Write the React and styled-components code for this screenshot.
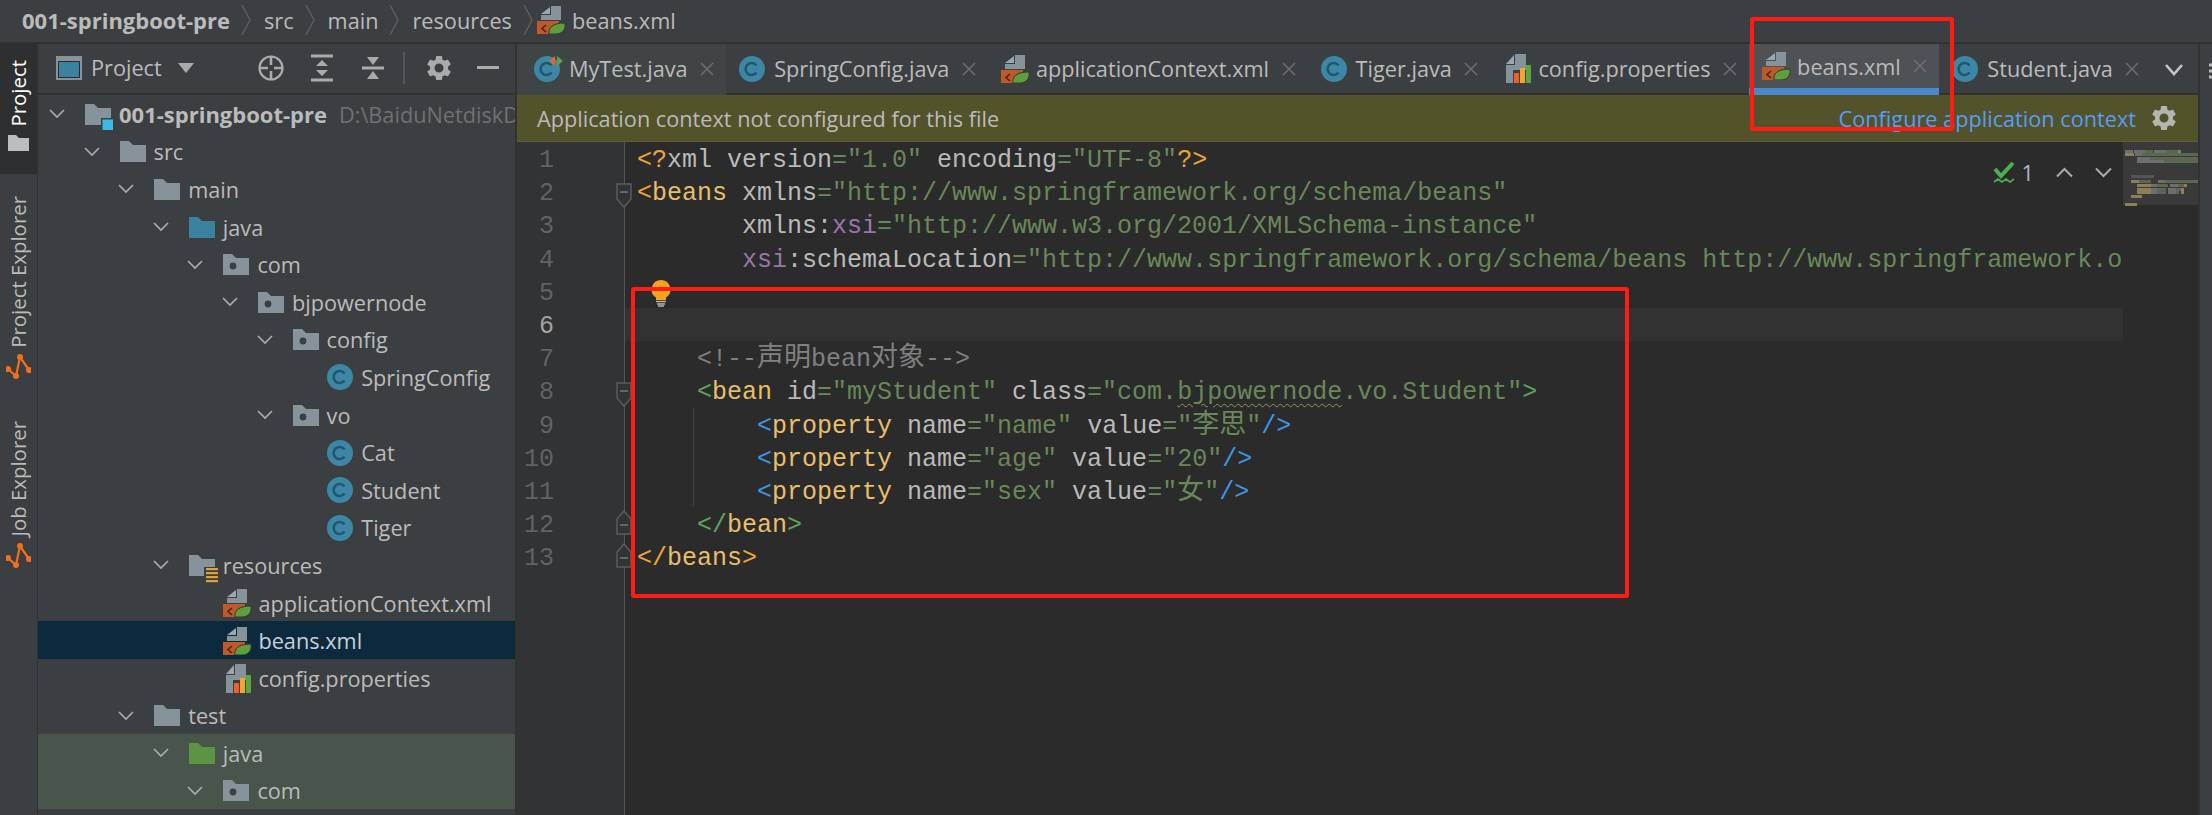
import React from 'react';
import styled, { createGlobalStyle } from 'styled-components';
import { MdSettings } from 'react-icons/md';

const GlobalStyle = createGlobalStyle`
  html, body { margin: 0; padding: 0; background: #3c3f41; }
  * { box-sizing: border-box; }
`;

const UI_FONT = `"Open Sans", "Noto Sans", "Noto Sans CJK SC", sans-serif`;
const CODE_FONT = `"Liberation Mono", "Noto Sans CJK SC", monospace`;

const Page = styled.div`
  position: relative;
  width: 2212px;
  height: 815px;
  overflow: hidden;
  display: flex;
  flex-direction: column;
  background: #3c3f41;
  font-family: ${UI_FONT};
  font-size: 21.7px;
  color: #bbbbbb;
`;

const Breadcrumbs = styled.div`
  flex: none;
  height: 44px;
  display: flex;
  align-items: center;
  padding: 0 0 2px 22px;
  border-bottom: 2px solid #323232;
`;
const Crumb = styled.span`
  font-weight: ${(p) => (p.$bold ? 700 : 400)};
  font-size: ${(p) => (p.$bold ? '22px' : 'inherit')};
  margin-left: ${(p) => p.$ml || 0}px;
  white-space: nowrap;
`;
const CrumbSep = styled.svg`
  width: 10px;
  height: 30px;
  margin: 0 ${(p) => p.$mr || 13}px 0 11px;
  flex: none;
`;

const Body = styled.div`
  flex: 1;
  display: flex;
  min-height: 0;
`;

const Strip = styled.div`
  flex: none;
  width: 38px;
  display: flex;
  flex-direction: column;
  border-right: 1px solid #323232;
`;
const StripTab = styled.div`
  display: flex;
  flex-direction: column;
  align-items: center;
  gap: ${(p) => p.$gap || 8}px;
  height: ${(p) => p.$h}px;
  padding-top: ${(p) => p.$top || 0}px;
  background: ${(p) => (p.$active ? '#2d2f30' : 'transparent')};
`;
const StripLabel = styled.span`
  writing-mode: vertical-rl;
  transform: rotate(180deg);
  font-size: 20.4px;
  line-height: 37px;
  white-space: nowrap;
  color: ${(p) => (p.$active ? '#ffffff' : '#bbbbbb')};
`;

const Panel = styled.div`
  flex: none;
  width: 477px;
  display: flex;
  flex-direction: column;
  overflow: hidden;
`;
const PanelHeader = styled.div`
  flex: none;
  height: 51px;
  display: flex;
  align-items: center;
  padding: 0 0 2px 18px;
  border-bottom: 2px solid #323232;
`;
const PanelTitle = styled.span`
  margin-left: 9px;
  width: 87px;
`;
const HeaderIcon = styled.svg`
  flex: none;
  margin-left: ${(p) => p.$ml || 0}px;
`;
const Tree = styled.div`
  flex: 1;
  overflow: hidden;
`;
const Row = styled.div`
  height: 37.6px;
  display: flex;
  align-items: center;
  white-space: nowrap;
  padding-top: 1px;
  padding-left: ${(p) => 11 + p.$depth * 34.6}px;
  background: ${(p) => (p.$selected ? '#0d293e' : p.$test ? '#49544a' : 'transparent')};
`;
const Chevron = styled.svg`
  flex: none;
  width: 16px;
  height: 10px;
  margin-right: 20px;
  visibility: ${(p) => (p.$hidden ? 'hidden' : 'visible')};
`;
const RowLabel = styled.span`
  margin-left: ${(p) => p.$ml || 8}px;
  font-weight: ${(p) => (p.$bold ? 700 : 400)};
  font-size: ${(p) => (p.$bold ? '22px' : 'inherit')};
  color: ${(p) => (p.$selected ? '#c8d0d8' : '#bbbbbb')};
`;
const Hint = styled.span`
  margin-left: 12px;
  color: #6f7173;
`;

const Divider = styled.div`
  flex: none;
  width: 2px;
  background: #323232;
`;

const EditorColumn = styled.div`
  flex: none;
  width: 1681px;
  display: flex;
  flex-direction: column;
  min-width: 0;
`;
const TabBar = styled.div`
  flex: none;
  height: 51px;
  display: flex;
  align-items: stretch;
  position: relative;
  box-shadow: inset 0 -2px 0 #323232;
`;
const Tab = styled.div`
  display: flex;
  align-items: center;
  white-space: nowrap;
  padding: ${(p) => (p.$active ? '0 12px 7px 13px' : '0 12px 2px 13px')};
  padding-left: ${(p) => (p.$first ? 17 : 13)}px;
  background: ${(p) => (p.$active ? '#4e5254' : p.$test ? '#3f4544' : 'transparent')};
  box-shadow: ${(p) => (p.$active ? 'inset 0 -7px 0 #4a88c7' : 'none')};
  color: #bbbbbb;
`;
const TabLabel = styled.span`
  margin-left: ${(p) => p.$ml}px;
`;
const CloseX = styled.svg`
  width: 14px;
  height: 14px;
  margin-left: 12.5px;
  flex: none;
`;
const TabsMore = styled.svg`
  position: absolute;
  right: 14px;
  top: 19px;
`;

const Banner = styled.div`
  flex: none;
  height: 47px;
  display: flex;
  align-items: center;
  justify-content: space-between;
  padding: 0 19px 0 20px;
  background: #52522b;
  border-bottom: 1px solid #5f5f3f;
`;
const BannerActions = styled.div`
  display: flex;
  align-items: center;
  gap: 13px;
`;
const BannerLink = styled.a`
  color: #589df6;
`;

const EditorBody = styled.div`
  flex: 1;
  position: relative;
  display: flex;
  min-height: 0;
  background: #2b2b2b;
`;
const Gutter = styled.div`
  flex: none;
  width: 108px;
  background: #313335;
  border-right: 1px solid #555555;
`;
const GutterRow = styled.div`
  position: relative;
  height: 33.2px;
  line-height: 37px;
  padding-right: 70px;
  text-align: right;
  font-family: ${CODE_FONT};
  font-size: 25px;
  color: ${(p) => (p.$current ? '#a4a3a3' : '#606366')};
`;
const FoldMark = styled.svg`
  position: absolute;
  right: -8px;
  top: ${(p) => (p.$up ? 3 : 8)}px;
`;
const CodeArea = styled.div`
  flex: 1;
  min-width: 0;
  overflow: hidden;
  font-family: ${CODE_FONT};
  font-size: 25px;
  color: #bababa;
`;
const Line = styled.div`
  height: 33.2px;
  line-height: 37px;
  padding-left: 12px;
  white-space: pre;
  background: ${(p) => (p.$current ? '#323232' : 'transparent')};
`;
const IndentGroup = styled.div`
  position: relative;
  &::before {
    content: '';
    position: absolute;
    left: 68px;
    top: 0;
    bottom: 0;
    width: 1px;
    background: #3b4a3a;
  }
`;
const T = styled.span`
  color: ${(p) => p.$c};
`;
const Squiggle = styled.span`
  text-decoration: underline wavy #8a9a62 1px;
  text-underline-offset: 4px;
`;
const Cjk = styled.span`
  font-size: 27px;
`;
const Bulb = styled.svg`
  position: absolute;
  left: 134px;
  top: 138px;
`;
const Status = styled.div`
  position: absolute;
  right: 86px;
  top: 16px;
  display: flex;
  align-items: center;
  color: #a9b7c6;
`;
const StatusCount = styled.span`
  margin: 0 22px 0 7px;
`;
const StatusArrow = styled.svg`
  margin-right: 22px;
`;
const Minimap = styled.div`
  flex: none;
  width: 75px;
`;
const RightStrip = styled.div`
  flex: none;
  width: 14px;
  border-left: 2px solid #323232;
  padding: 18px 0 0 9px;
  overflow: hidden;
`;
const Callout = styled.div`
  position: absolute;
  left: ${(p) => p.$x}px;
  top: ${(p) => p.$y}px;
  width: ${(p) => p.$w}px;
  height: ${(p) => p.$h}px;
  border: 4px solid #fe1d14;
  border-radius: 3px;
  pointer-events: none;
`;

const KW = '#e8bf6a';
const ORANGE = '#f0a732';
const GREEN = '#5aa75a';
const BLUE = '#3b97e3';
const STR = '#6a8759';
const ATTR = '#bababa';

const FolderIcon = ({ color = '#87939a', dot, children }) => (
  <svg width="26" height="21" viewBox="0 0 26 21" style={{ flex: 'none', overflow: 'visible' }}>
    <path d="M0 0h9l4 4h13v17H0z" fill={color} />
    {dot && <circle cx="10" cy="12" r="3.4" fill="#3c3f41" />}
    {children}
  </svg>
);

const ClassIcon = ({ test }) => (
  <svg width="26" height="26" viewBox="0 0 26 26" style={{ flex: 'none', overflow: 'visible' }}>
    <circle cx="13" cy="13" r="13" fill="#3d87a6" />
    <path d="M17.5 9.5a6 6 0 1 0 0 7" fill="none" stroke="#24566c" strokeWidth="2.6" />
    {test && (
      <>
        <path d="M21 0l-6 5 6 5z" fill="#e8632a" />
        <path d="M23 0l6 5-6 5z" fill="#5aa640" />
      </>
    )}
  </svg>
);

const SpringIcon = () => (
  <svg width="29" height="28" viewBox="0 0 29 28" style={{ flex: 'none' }}>
    <path d="M4 8l9-7v7z" fill="#9aa7b0" />
    <path d="M14 0h10v14H4V9h10z" fill="#87939a" />
    <rect x="0" y="15" width="22" height="13" fill="#c0592a" />
    <path d="M9 19l-4 3.5 4 3.5" fill="none" stroke="#3c2a20" strokeWidth="1.6" />
    <path d="M12 28c-1-6 3-11 16-11 1 7-3 11-9 11z" fill="#5d9e3f" stroke="#2d3b2a" strokeWidth="1" />
  </svg>
);

const PropsIcon = () => (
  <svg width="29" height="29" viewBox="0 0 29 29" style={{ flex: 'none' }}>
    <path d="M3 10l8-9v9z" fill="#9aa7b0" />
    <path d="M12 0h11v29H3V11h9z" fill="#87939a" />
    <rect x="10" y="16" width="19" height="13" fill="#3c3f41" />
    <rect x="11" y="19" width="5" height="10" fill="#e8632a" />
    <rect x="17" y="14" width="5" height="15" fill="#f0a732" />
    <rect x="23" y="11" width="5" height="18" fill="#5aa640" />
  </svg>
);

const FileIcon = ({ kind, test }) => {
  if (kind === 'class') return <ClassIcon test={test} />;
  if (kind === 'spring') return <SpringIcon />;
  return <PropsIcon />;
};

const TreeChevron = ({ hidden }) => (
  <Chevron $hidden={hidden} viewBox="0 0 16 10">
    <path d="M1 1l7 7 7-7" fill="none" stroke="#a9abad" strokeWidth="1.7" />
  </Chevron>
);

const RowIcon = ({ kind }) => {
  switch (kind) {
    case 'root':
      return (
        <FolderIcon>
          <rect x="16" y="14" width="13" height="13" fill="#3c3f41" />
          <rect x="17.5" y="15.5" width="10.5" height="10.5" fill="#3db9e8" />
        </FolderIcon>
      );
    case 'folder':
      return <FolderIcon />;
    case 'package':
      return <FolderIcon dot />;
    case 'source':
      return <FolderIcon color="#3a82a0" />;
    case 'testSource':
      return <FolderIcon color="#5a9444" />;
    case 'resources':
      return (
        <FolderIcon>
          <rect x="15" y="12" width="15" height="16" fill="#3c3f41" />
          {[13, 17, 21, 25].map((y) => (
            <rect key={y} x="17" y={y} width="12" height="2.2" fill="#d9a343" />
          ))}
        </FolderIcon>
      );
    default:
      return <FileIcon kind={kind} />;
  }
};

const rows = [
  { depth: 0, icon: 'root', label: '001-springboot-pre', bold: true, hint: 'D:\\BaiduNetdiskD' },
  { depth: 1, icon: 'folder', label: 'src' },
  { depth: 2, icon: 'folder', label: 'main' },
  { depth: 3, icon: 'source', label: 'java' },
  { depth: 4, icon: 'package', label: 'com' },
  { depth: 5, icon: 'package', label: 'bjpowernode' },
  { depth: 6, icon: 'package', label: 'config' },
  { depth: 7, icon: 'class', label: 'SpringConfig', leaf: true },
  { depth: 6, icon: 'package', label: 'vo' },
  { depth: 7, icon: 'class', label: 'Cat', leaf: true },
  { depth: 7, icon: 'class', label: 'Student', leaf: true },
  { depth: 7, icon: 'class', label: 'Tiger', leaf: true },
  { depth: 3, icon: 'resources', label: 'resources' },
  { depth: 4, icon: 'spring', label: 'applicationContext.xml', leaf: true },
  { depth: 4, icon: 'spring', label: 'beans.xml', leaf: true, selected: true },
  { depth: 4, icon: 'props', label: 'config.properties', leaf: true },
  { depth: 2, icon: 'folder', label: 'test' },
  { depth: 3, icon: 'testSource', label: 'java', test: true },
  { depth: 4, icon: 'package', label: 'com', test: true },
];

const tabs = [
  { label: 'MyTest.java', kind: 'class', first: true, test: true },
  { label: 'SpringConfig.java', kind: 'class' },
  { label: 'applicationContext.xml', kind: 'spring' },
  { label: 'Tiger.java', kind: 'class' },
  { label: 'config.properties', kind: 'props' },
  { label: 'beans.xml', kind: 'spring', active: true },
  { label: 'Student.java', kind: 'class' },
];

const foldMarks = { 2: 'down', 8: 'down', 12: 'up', 13: 'up' };

const FoldIcon = ({ up }) => (
  <FoldMark $up={up} width="16" height="26" viewBox="0 0 16 26">
    <path
      d={up ? 'M1 9l7-8 7 8v15H1z' : 'M1 1h14v15l-7 8-7-8z'}
      fill="#313335"
      stroke="#5a5c5e"
      strokeWidth="1.5"
    />
    <path d={up ? 'M4 15h8' : 'M4 9h8'} stroke="#77797b" strokeWidth="1.5" />
  </FoldMark>
);

const Minidoc = () => {
  const c = { k: '#8f7f58', g: '#5b6750', w: '#6e6e6e' };
  const bars = [
    [150, [[2, 8, c.w], [11, 11, c.w], [22, 8, c.g], [31, 12, c.w], [43, 12, c.g], [55, 3, c.k]]],
    [153, [[2, 9, c.k], [12, 7, c.w], [19, 56, c.g]]],
    [157, [[14, 13, c.w], [27, 48, c.g]]],
    [160, [[14, 27, c.w], [41, 34, c.g]]],
    [175, [[8, 23, '#555555']]],
    [180, [[8, 8, c.k], [16, 12, c.g], [35, 7, c.w], [42, 33, c.g]]],
    [184, [[14, 14, c.k], [28, 6, c.w], [34, 11, c.g], [47, 8, c.w], [55, 6, c.g], [61, 3, c.k]]],
    [188, [[14, 14, c.k], [28, 6, c.w], [34, 9, c.g], [45, 8, c.w], [53, 5, c.g], [58, 3, c.k]]],
    [191, [[14, 14, c.k], [28, 6, c.w], [34, 9, c.g], [45, 8, c.w], [53, 3, c.g], [58, 3, c.k]]],
    [195, [[8, 11, c.k]]],
    [203, [[2, 12, c.k]]],
  ];
  return (
    <svg width="75" height="66" viewBox="0 0 75 66" style={{ display: 'block' }}>
      <rect width="75" height="63" fill="#3a3a3a" />
      {bars.map(([y, parts]) =>
        parts.map(([x, w, fill]) => (
          <rect key={`${y}-${x}`} x={x} y={y - 142} width={w} height="3" fill={fill} />
        ))
      )}
    </svg>
  );
};

const NodesIcon = () => (
  <svg width="25" height="26" viewBox="0 0 25 26">
    <path d="M23 16L14 3 10 22 2 15" fill="none" stroke="#f26f1c" strokeWidth="2.2" />
    {[[23, 16], [14, 3], [10, 22], [2, 15]].map(([cx, cy]) => (
      <circle key={cx} cx={cx} cy={cy} r="3" fill="#f26f1c" />
    ))}
  </svg>
);

const Sep = ({ mr }) => (
  <CrumbSep $mr={mr} viewBox="0 0 10 30">
    <path d="M1 0l8 15-8 15" fill="none" stroke="#5e6163" strokeWidth="1.3" />
  </CrumbSep>
);

export default function App() {
  const lineNumbers = Array.from({ length: 13 }, (_, i) => i + 1);
  return (
    <Page>
      <GlobalStyle />
      <Breadcrumbs>
        <Crumb $bold>001-springboot-pre</Crumb>
        {['src', 'main', 'resources'].map((c) => (
          <React.Fragment key={c}>
            <Sep />
            <Crumb>{c}</Crumb>
          </React.Fragment>
        ))}
        <Sep mr={4} />
        <SpringIcon />
        <Crumb $ml={6}>beans.xml</Crumb>
      </Breadcrumbs>

      <Body>
        <Strip>
          <StripTab $active $h={130} $top={16}>
            <StripLabel $active>Project</StripLabel>
            <svg width="21" height="16" viewBox="0 0 21 16">
              <path d="M0 0h8l3 3h10v13H0z" fill="#bdbdbd" />
            </svg>
          </StripTab>
          <StripTab $h={239} $top={22} $gap={6}>
            <StripLabel>Project Explorer</StripLabel>
            <NodesIcon />
          </StripTab>
          <StripTab $h={160} $top={8} $gap={6}>
            <StripLabel>Job Explorer</StripLabel>
            <NodesIcon />
          </StripTab>
        </Strip>

        <Panel>
          <PanelHeader>
            <svg width="26" height="24" viewBox="0 0 26 24" style={{ flex: 'none' }}>
              <rect width="26" height="24" fill="#87939a" />
              <rect x="2" y="5" width="22" height="17" fill="#2b2b2b" />
              <rect x="3" y="6" width="20" height="15" fill="#3a82a0" />
            </svg>
            <PanelTitle>Project</PanelTitle>
            <svg width="16" height="10" viewBox="0 0 16 10" style={{ flex: 'none' }}>
              <path d="M0 0h16l-8 10z" fill="#a9abad" />
            </svg>
            <HeaderIcon $ml={64} width="26" height="26" viewBox="0 0 26 26">
              <circle cx="13" cy="13" r="11.5" fill="none" stroke="#a9abad" strokeWidth="2.2" />
              <path d="M13 1v9M13 16v9M1 13h9M16 13h9" stroke="#a9abad" strokeWidth="2.6" />
            </HeaderIcon>
            <HeaderIcon $ml={26} width="24" height="28" viewBox="0 0 24 28">
              <path d="M1 2h22M1 26h22" stroke="#a9abad" strokeWidth="3" />
              <path d="M12 6l6 6H6zM12 22l6-6H6z" fill="#a9abad" />
            </HeaderIcon>
            <HeaderIcon $ml={27} width="24" height="26" viewBox="0 0 24 26">
              <path d="M1 13h22" stroke="#a9abad" strokeWidth="3" />
              <path d="M12 10L6 2h12zM12 16l6 8H6z" fill="#a9abad" />
            </HeaderIcon>
            <HeaderIcon $ml={18} width="2" height="32" viewBox="0 0 2 32">
              <rect width="2" height="32" fill="#55585a" />
            </HeaderIcon>
            <HeaderIcon as={MdSettings} $ml={19} size={30} color="#a9abad" />
            <HeaderIcon $ml={23} width="22" height="4" viewBox="0 0 22 4">
              <rect width="22" height="3" fill="#a9abad" />
            </HeaderIcon>
          </PanelHeader>
          <Tree>
            {rows.map((r, i) => (
              <Row key={i} $depth={r.depth} $selected={r.selected} $test={r.test}>
                <TreeChevron hidden={r.leaf} />
                <RowIcon kind={r.icon} />
                <RowLabel
                  $bold={r.bold}
                  $selected={r.selected}
                  $ml={r.icon === 'spring' || r.icon === 'props' ? 6 : 8}
                >
                  {r.label}
                </RowLabel>
                {r.hint && <Hint>{r.hint}</Hint>}
              </Row>
            ))}
          </Tree>
        </Panel>

        <Divider />

        <EditorColumn>
          <TabBar>
            {tabs.map((t) => (
              <Tab key={t.label} $active={t.active} $first={t.first} $test={t.test}>
                <FileIcon kind={t.kind} test={t.test} />
                <TabLabel $ml={t.kind === 'class' ? 9 : 6}>{t.label}</TabLabel>
                <CloseX viewBox="0 0 14 14">
                  <path d="M1 1l12 12M13 1L1 13" stroke="#6a6d6f" strokeWidth="1.6" />
                </CloseX>
              </Tab>
            ))}
            <TabsMore width="20" height="14" viewBox="0 0 20 14">
              <path d="M2 2l8 9 8-9" fill="none" stroke="#c4c6c8" strokeWidth="2.6" />
            </TabsMore>
          </TabBar>

          <Banner>
            <span>Application context not configured for this file</span>
            <BannerActions>
              <BannerLink>Configure application context</BannerLink>
              <MdSettings size={30} color="#b5b5b0" />
            </BannerActions>
          </Banner>

          <EditorBody>
            <Gutter>
              {lineNumbers.map((n) => (
                <GutterRow key={n} $current={n === 6}>
                  {n}
                  {foldMarks[n] && <FoldIcon up={foldMarks[n] === 'up'} />}
                </GutterRow>
              ))}
            </Gutter>

            <CodeArea>
              <Line>
                <T $c={ORANGE}>&lt;?</T>xml version<T $c={STR}>=&quot;1.0&quot;</T> encoding
                <T $c={STR}>=&quot;UTF-8&quot;</T>
                <T $c={ORANGE}>?&gt;</T>
              </Line>
              <Line>
                <T $c={ORANGE}>&lt;</T>
                <T $c={KW}>beans</T> <T $c={ATTR}>xmlns</T>
                <T $c={STR}>=&quot;http://www.springframework.org/schema/beans&quot;</T>
              </Line>
              <Line>
                {'       xmlns:'}
                <T $c="#9876aa">xsi</T>
                <T $c={STR}>=&quot;http://www.w3.org/2001/XMLSchema-instance&quot;</T>
              </Line>
              <Line>
                {'       '}
                <T $c="#9876aa">xsi</T>:schemaLocation
                <T $c={STR}>
                  =&quot;http://www.springframework.org/schema/beans
                  http://www.springframework.org/schema/beans/spring-beans.xsd&quot;
                </T>
                <T $c={ORANGE}>&gt;</T>
              </Line>
              <Line />
              <Line $current />
              <Line>
                <T $c="#808080">
                  {'    <!--'}
                  <Cjk>声明</Cjk>bean<Cjk>对象</Cjk>
                  {'-->'}
                </T>
              </Line>
              <Line>
                {'    '}
                <T $c={GREEN}>&lt;</T>
                <T $c={KW}>bean</T> id<T $c={STR}>=&quot;myStudent&quot;</T> class
                <T $c={STR}>
                  =&quot;com.<Squiggle>bjpowernode</Squiggle>.vo.Student&quot;
                </T>
                <T $c={GREEN}>&gt;</T>
              </Line>
              <IndentGroup>
                <Line>
                  {'        '}
                  <T $c={BLUE}>&lt;</T>
                  <T $c={KW}>property</T> name<T $c={STR}>=&quot;name&quot;</T> value
                  <T $c={STR}>
                    =&quot;<Cjk>李思</Cjk>&quot;
                  </T>
                  <T $c={BLUE}>/&gt;</T>
                </Line>
                <Line>
                  {'        '}
                  <T $c={BLUE}>&lt;</T>
                  <T $c={KW}>property</T> name<T $c={STR}>=&quot;age&quot;</T> value
                  <T $c={STR}>=&quot;20&quot;</T>
                  <T $c={BLUE}>/&gt;</T>
                </Line>
                <Line>
                  {'        '}
                  <T $c={BLUE}>&lt;</T>
                  <T $c={KW}>property</T> name<T $c={STR}>=&quot;sex&quot;</T> value
                  <T $c={STR}>
                    =&quot;<Cjk>女</Cjk>&quot;
                  </T>
                  <T $c={BLUE}>/&gt;</T>
                </Line>
              </IndentGroup>
              <Line>
                {'    '}
                <T $c={GREEN}>&lt;/</T>
                <T $c={KW}>bean</T>
                <T $c={GREEN}>&gt;</T>
              </Line>
              <Line>
                <T $c={ORANGE}>&lt;/</T>
                <T $c={KW}>beans</T>
                <T $c={ORANGE}>&gt;</T>
              </Line>
            </CodeArea>

            <Minimap>
              <Minidoc />
            </Minimap>

            <Bulb width="20" height="27" viewBox="0 0 20 27">
              <path d="M10 0a9.5 9.5 0 0 1 5 17.5V20H5v-2.5A9.5 9.5 0 0 1 10 0z" fill="#f2a41f" />
              <path d="M5 21.5h10M6 24h8M7 26h6" stroke="#b5b5b5" strokeWidth="1.4" />
            </Bulb>

            <Status>
              <svg width="22" height="21" viewBox="0 0 22 21">
                <path d="M2 7l6 7L20 1" fill="none" stroke="#4caf50" strokeWidth="4" />
                <path d="M1 20l4-3 4 3 4-3 4 3 4-3" fill="none" stroke="#4caf50" strokeWidth="1.6" />
              </svg>
              <StatusCount>1</StatusCount>
              <StatusArrow width="17" height="11" viewBox="0 0 17 11">
                <path d="M1 9.5l7.5-7.5 7.5 7.5" fill="none" stroke="#a9abad" strokeWidth="2" />
              </StatusArrow>
              <svg width="17" height="11" viewBox="0 0 17 11">
                <path d="M1 1.5l7.5 7.5 7.5-7.5" fill="none" stroke="#a9abad" strokeWidth="2" />
              </svg>
            </Status>
          </EditorBody>
        </EditorColumn>

        <RightStrip>
          <svg width="3" height="21" viewBox="0 0 3 21" style={{ display: 'block' }}>
            <path d="M0 3h3M0 9h3M0 15h3" stroke="#bbbbbb" strokeWidth="3" />
          </svg>
        </RightStrip>
      </Body>

      <Callout $x={1750} $y={17} $w={204} $h={114} />
      <Callout $x={631} $y={287} $w={998} $h={311} />
    </Page>
  );
}
